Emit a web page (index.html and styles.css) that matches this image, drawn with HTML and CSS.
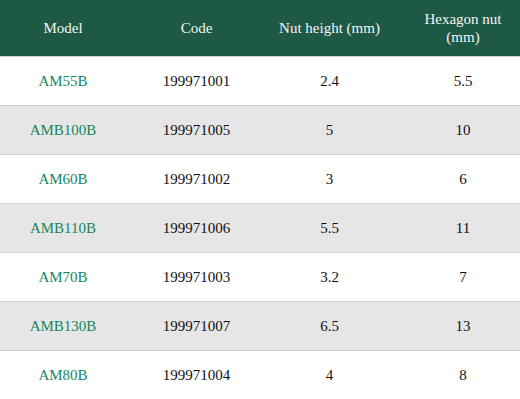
FILE: index.html
```html
<!DOCTYPE html>
<html>
<head>
<meta charset="utf-8">
<link rel="stylesheet" href="styles.css">
</head>
<body>
<table class="spec">
  <colgroup>
    <col class="c1"><col class="c2"><col class="c3"><col class="c4">
  </colgroup>
  <thead>
    <tr><th class="first">Model</th><th>Code</th><th>Nut height (mm)</th><th class="last">Hexagon nut (mm)</th></tr>
  </thead>
  <tbody>
    <tr><td class="first model">AM55B</td><td>199971001</td><td>2.4</td><td class="last">5.5</td></tr>
    <tr><td class="first model">AMB100B</td><td>199971005</td><td>5</td><td class="last">10</td></tr>
    <tr><td class="first model">AM60B</td><td>199971002</td><td>3</td><td class="last">6</td></tr>
    <tr><td class="first model">AMB110B</td><td>199971006</td><td>5.5</td><td class="last">11</td></tr>
    <tr><td class="first model">AM70B</td><td>199971003</td><td>3.2</td><td class="last">7</td></tr>
    <tr><td class="first model">AMB130B</td><td>199971007</td><td>6.5</td><td class="last">13</td></tr>
    <tr><td class="first model">AM80B</td><td>199971004</td><td>4</td><td class="last">8</td></tr>
  </tbody>
</table>
</body>
</html>
```
FILE: styles.css
```css
html, body {
  margin: 0;
  padding: 0;
  background: #ffffff;
}
body {
  font-family: "Liberation Serif", "Times New Roman", serif;
  font-size: 15px;
  color: #111111;
  overflow: hidden;
}
.spec {
  width: 520px;
  border-collapse: collapse;
  table-layout: fixed;
  font-family: "Liberation Serif", "Times New Roman", serif;
}
.c1 { width: 130px; }
.c2 { width: 133px; }
.c3 { width: 133px; }
.c4 { width: 124px; }
.spec th {
  background: #1e5945;
  color: #f4f4f4;
  font-weight: normal;
  height: 56px;
  line-height: 18px;
  padding: 0 10px;
  text-align: center;
  vertical-align: middle;
  box-sizing: border-box;
}
.spec td {
  height: 49px;
  box-sizing: border-box;
  border-top: 1px solid #cfcfcf;
  padding: 0 10px;
  text-align: center;
  vertical-align: middle;
  line-height: 18px;
}
.spec tbody tr:nth-child(even) td {
  background: #e6e6e6;
}
.spec .first {
  padding-left: 6px;
  padding-right: 10px;
}
.spec .last {
  padding-left: 16px;
  padding-right: 6px;
}
.spec .model {
  color: #13885f;
}
```
